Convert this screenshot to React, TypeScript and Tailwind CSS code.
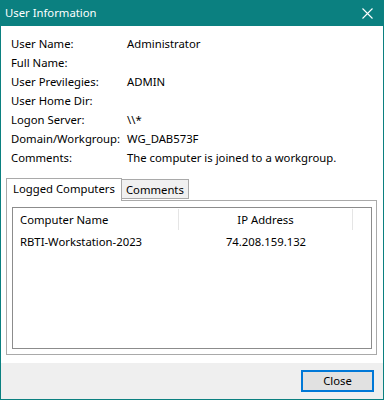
const info: [string, string][] = [
  ["User Name:", "Administrator"],
  ["Full Name:", ""],
  ["User Previlegies:", "ADMIN"],
  ["User Home Dir:", ""],
  ["Logon Server:", "\\\\*"],
  ["Domain/Workgroup:", "WG_DAB573F"],
  ["Comments:", "The computer is joined to a workgroup."],
];

const App = () => {
  return (
    <div className="w-[384px] h-[400px] flex flex-col border border-t-0 border-[#0b8080] bg-white text-[11.3px] text-black font-['Noto_Sans',sans-serif] overflow-hidden">
      {/* Title bar */}
      <div className="h-[26px] shrink-0 -mx-px bg-[#0b8080] flex items-center justify-between pl-[5px] pr-[11px] text-white">
        <span>User Information</span>
        <svg width="11" height="11" viewBox="0 0 11 11" stroke="white" strokeWidth="1.1">
          <path d="M0.5 0.5 L10.5 10.5 M10.5 0.5 L0.5 10.5" />
        </svg>
      </div>

      {/* Body */}
      <div className="flex-1 flex flex-col pt-[8px] px-[5px] pb-[8px]">
        <div className="grid grid-cols-[116px_1fr] pl-[5px]">
          {info.map(([label, value]) => (
            <div key={label} className="contents">
              <span className="h-[19px] leading-[19px]">{label}</span>
              <span className="h-[19px] leading-[19px]">{value}</span>
            </div>
          ))}
        </div>

        {/* Tabs */}
        <div className="mt-[11px] flex items-end h-[22px] relative z-10">
          <div className="h-[23px] px-[6px] border border-b-0 border-[#a9a9a9] bg-white leading-[20px] -mb-px">
            Logged Computers
          </div>
          <div className="h-[20px] px-[4px] border border-l-0 border-[#a9a9a9] bg-[#f0f0f0] leading-[19px] mb-px">
            Comments
          </div>
        </div>
        <div className="flex-1 border border-[#a9a9a9] mr-[1px] pt-[6px] pl-[5px] pr-[4px] pb-[5px] flex">
          <div className="flex-1 border border-[#8c8c8c] flex flex-col">
            <div className="flex h-[23px] items-center">
              <div className="w-[166px] pl-[7px] h-[21px] leading-[21px] border-r border-[#e5e5e5]">
                Computer Name
              </div>
              <div className="w-[174px] text-center h-[21px] leading-[21px] border-r border-[#e5e5e5]">
                IP Address
              </div>
            </div>
            <div className="flex h-[22px] items-center">
              <div className="w-[166px] pl-[7px]">RBTI-Workstation-2023</div>
              <div className="w-[174px] text-center">74.208.159.132</div>
            </div>
          </div>
        </div>
      </div>

      {/* Footer */}
      <div className="h-[36px] shrink-0 bg-[#efefef] flex items-start justify-end pt-[7px] pr-[9px]">
        <button
          type="button"
          className="w-[73px] h-[22px] border-2 border-[#0078d7] bg-[#e1e1e1] leading-[16px]"
        >
          Close
        </button>
      </div>
    </div>
  );
};

export default App;
